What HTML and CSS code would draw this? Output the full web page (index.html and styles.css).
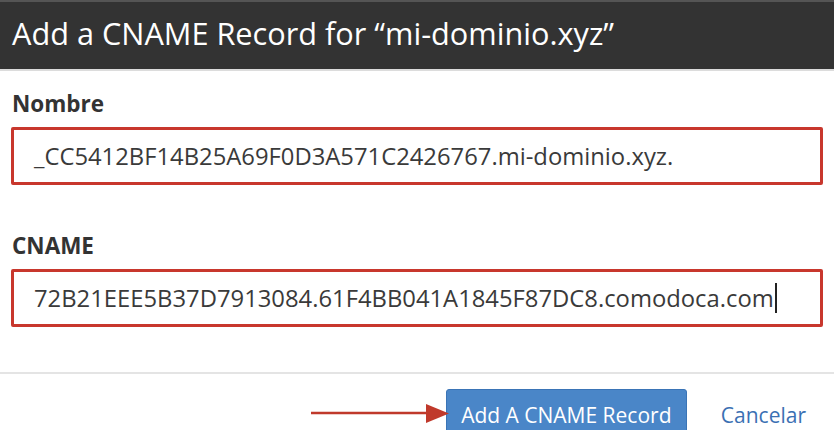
FILE: index.html
```html
<!DOCTYPE html>
<html>
<head>
<meta charset="utf-8">
<link rel="stylesheet" href="styles.css">
</head>
<body>
<div class="modal">
  <div class="modal-header">
    <h1 class="modal-title">Add a CNAME Record for “mi-dominio.xyz”</h1>
  </div>
  <div class="modal-body">
    <div class="field">
      <label class="field-label">Nombre</label>
      <div class="field-input">_CC5412BF14B25A69F0D3A571C2426767.mi-dominio.xyz.</div>
    </div>
    <div class="field">
      <label class="field-label">CNAME</label>
      <div class="field-input">72B21EEE5B37D7913084.61F4BB041A1845F87DC8.comodoca.com<span class="caret"></span></div>
    </div>
  </div>
  <div class="modal-footer">
    <div class="arrow">
      <svg width="138" height="22" viewBox="0 0 138 22"><line x1="0" y1="11" x2="120" y2="11" stroke="#c0392b" stroke-width="2.6"/><polygon points="115,2 138,11.5 115,21" fill="#c0392b"/></svg>
    </div>
    <button class="btn-primary">Add A CNAME Record</button>
    <a class="btn-link">Cancelar</a>
  </div>
</div>
</body>
</html>
```

FILE: styles.css
```css
html, body {
  margin: 0;
  padding: 0;
  background: #ffffff;
}
body {
  font-family: "Open Sans", "Noto Sans", sans-serif;
  width: 834px;
  height: 430px;
  overflow: hidden;
}
.modal {
  display: flex;
  flex-direction: column;
}
.modal-header {
  background: #333333;
  border-top: 2px solid #555555;
  border-bottom: 2px solid #dcdcdc;
  height: 67px;
  display: flex;
  align-items: center;
  padding: 0 12px;
}
.modal-title {
  margin: 0 0 5px 0;
  color: #ffffff;
  font-weight: 400;
  font-size: 30.7px;
  line-height: 1;
  letter-spacing: 0;
}
.modal-body {
  padding: 18px 11px 0 11px;
}
.field {
  display: flex;
  flex-direction: column;
}
.field + .field {
  margin-top: 46px;
}
.field-label {
  font-weight: 700;
  font-size: 22.5px;
  color: #333333;
  padding-left: 1px;
  line-height: 29px;
  margin-bottom: 9px;
}
.field-input {
  border: 3px solid #c8372d;
  border-radius: 2px;
  height: 52px;
  box-sizing: content-box;
  display: flex;
  align-items: center;
  padding-left: 20px;
  font-size: 23.8px;
  color: #3a3a3a;
  white-space: nowrap;
}
.caret {
  display: inline-block;
  width: 2px;
  height: 30px;
  background: #222;
  margin-left: 1px;
}
.modal-footer {
  margin-top: 45px;
  border-top: 2px solid #e4e4e4;
  display: flex;
  justify-content: flex-end;
  align-items: flex-start;
  padding: 15px 28px 0 0;
  position: relative;
}
.arrow {
  position: absolute;
  left: 311px;
  top: 28px;
  line-height: 0;
}
.btn-primary {
  font-family: "Open Sans", "Noto Sans", sans-serif;
  background: #4a86c8;
  border: 1px solid #3a74b6;
  border-radius: 3px;
  color: #ffffff;
  font-size: 21px;
  width: 241px;
  height: 56px;
  padding: 11px 0 0 0;
  display: flex;
  justify-content: center;
  align-items: flex-start;
}
.btn-link {
  color: #3b70b3;
  font-size: 21px;
  margin-left: 34px;
  padding-top: 12px;
}
```
